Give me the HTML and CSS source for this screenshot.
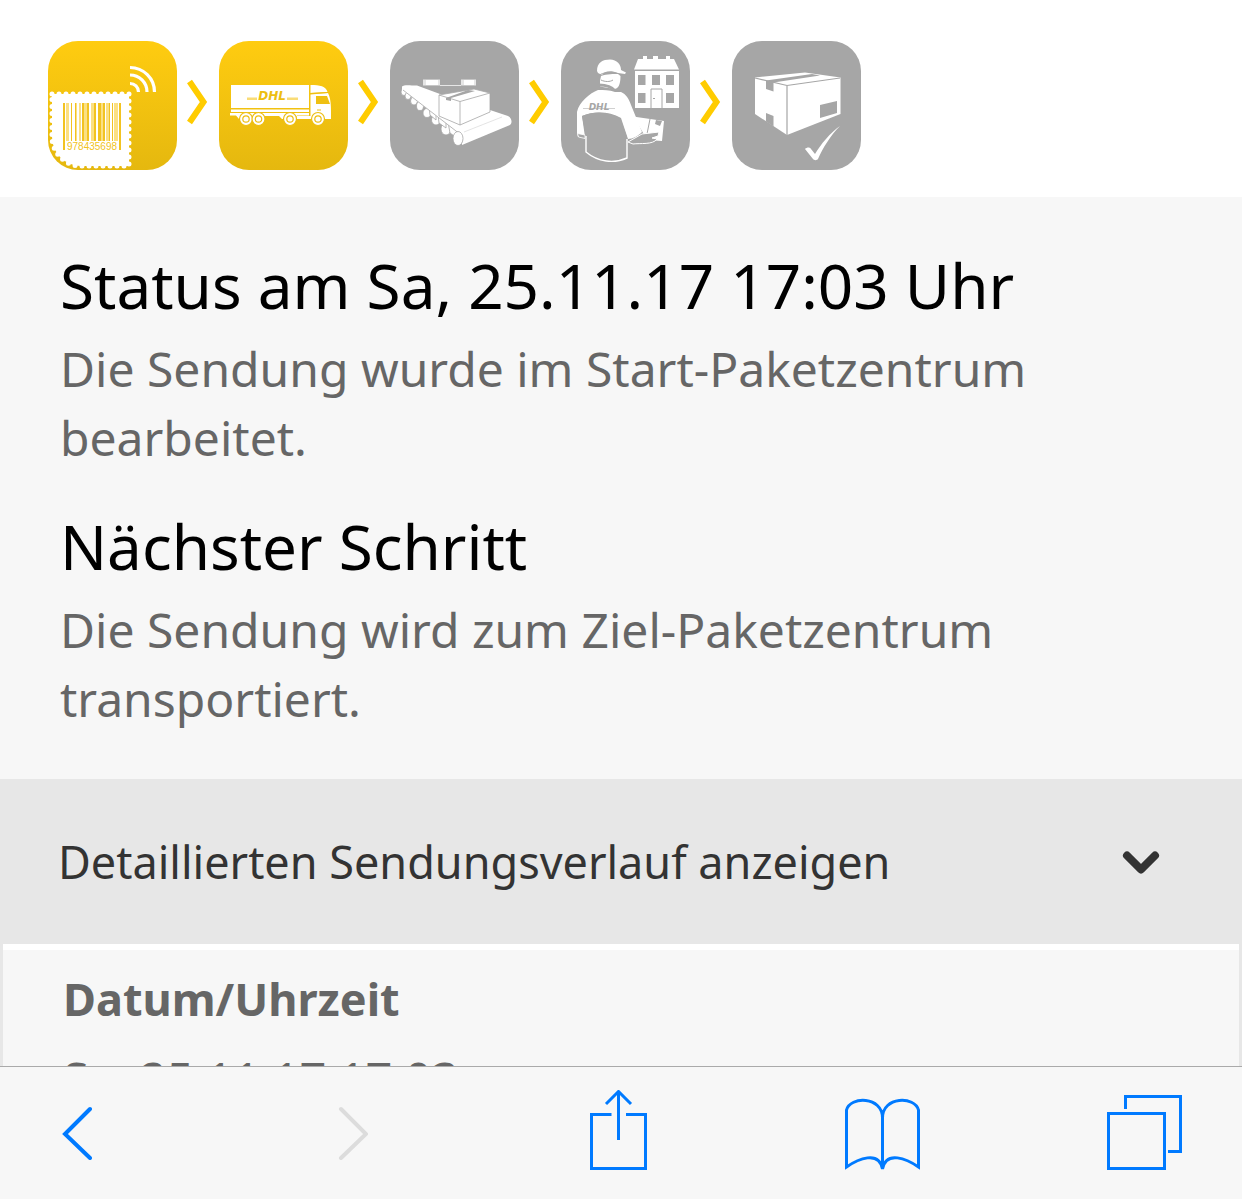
FILE: index.html
```html
<!DOCTYPE html>
<html lang="de">
<head>
  <meta charset="UTF-8" />
  <meta name="viewport" content="width=device-width, initial-scale=1.0"/>
  <title>DHL Sendungsverfolgung</title>
  <link rel="stylesheet" href="styles.css">
</head>
<body>
<svg class="defs" aria-hidden="true">
  <defs>
    <linearGradient id="gold" x1="0" y1="0" x2="0" y2="1">
      <stop offset="0" stop-color="#ffcc10"/>
      <stop offset="1" stop-color="#e5b80f"/>
    </linearGradient>
    <symbol id="arrow" viewBox="0 0 22 54">
      <path d="M2.500 2.500L16.500 23L2.500 43.500" fill="none" stroke="#fc0" stroke-width="6"/>
    </symbol>
  </defs>
</svg>

<main class="page">
  <ol class="steps">
    <li class="step">
      <!-- Stamp with barcode -->
      <svg class="step-icon" viewBox="0 0 129 129" role="img" aria-label="Elektronisch angekündigt">
        <rect width="129" height="129" rx="30" fill="url(#gold)"/>
        <path d="M4 53H81V125H33A29 29 0 0 1 4 96Z" fill="#fff"/>
        <path d="M4 53H81V125H33A29 29 0 0 1 4 96Z" fill="none" stroke="#fff" stroke-width="5" stroke-linecap="round" stroke-dasharray="0 7"/>
        <g fill="none" stroke="#fff" stroke-width="3.200">
          <path d="M82 26.500A24.500 24.500 0 0 1 106.500 51"/>
          <path d="M82 34A17 17 0 0 1 99 51"/>
          <path d="M82 42.500A8.500 8.500 0 0 1 90.500 51"/>
        </g>
        <path d="M18 62h3v38h-3zM27 62h2v38h-2zM31 62h2v38h-2zM35 62h4v38h-4zM43 62h4v38h-4zM53 62h2v38h-2zM58 62h4v38h-4zM66 62h4v38h-4z" fill="#fbe083"/>
        <g fill="#f2c321">
          <path d="M15 62h2v47h-2zM71 62h2v47h-2z"/>
          <path d="M23 62h1v38h-1zM27 62h1v38h-1zM34 62h2v38h-2zM39 62h2v38h-2zM46 62h2v38h-2zM50 62h3v38h-3zM55 62h2v38h-2zM61 62h1v38h-1zM64 62h1v38h-1z"/>
        </g>
        <text class="barcode-text" x="44" y="109" text-anchor="middle">978435698</text>
      </svg>
      <svg class="step-arrow" aria-hidden="true"><use href="#arrow"/></svg>
    </li>
    <li class="step">
      <!-- Truck -->
      <svg class="step-icon" viewBox="0 0 129 129" role="img" aria-label="Transport zum Start-Paketzentrum">
        <rect width="129" height="129" rx="30" fill="url(#gold)"/>
        <path d="M12 44H90V67H12zM12 68.500H90V71H12zM11 72H90V74.500H78L76 78H63L60 75H46L44 78H20L17 74.500H11z" fill="#fff"/>
        <path d="M91.500 44C101 44 107 45 108.500 51L91.500 52zM91.500 53.500L109 52C112 58 112 66 112 70V78H78V75H91.500z" fill="#fff"/>
        <path d="M97 55H108L111 63H97z" fill="#efc012"/>
        <path d="M98 69h4M91 52.500l18-1" stroke="#efc012" stroke-width="1"/>
        <path d="M28 56.500H38V59H28zM68 56.500H79V59H68z" fill="#f9dc77"/>
        <text class="logo-text" x="53" y="59" text-anchor="middle">DHL</text>
        <g fill="#fff" stroke="#edbe12" stroke-width="1.200">
          <circle cx="27" cy="78" r="6.500"/><circle cx="39.500" cy="78" r="6.500"/>
          <circle cx="71" cy="78" r="6.500"/><circle cx="99" cy="78" r="6.500"/>
          <circle cx="27" cy="78" r="3.200"/><circle cx="39.500" cy="78" r="3.200"/>
          <circle cx="71" cy="78" r="3.200"/><circle cx="99" cy="78" r="3.200"/>
        </g>
      </svg>
      <svg class="step-arrow" aria-hidden="true"><use href="#arrow"/></svg>
    </li>
    <li class="step">
      <!-- Conveyor belt -->
      <svg class="step-icon" viewBox="0 0 129 129" role="img" aria-label="Ziel-Paketzentrum">
        <rect width="129" height="129" rx="30" fill="#a6a6a6"/>
        <path d="M33 38.500H50V44.500H33zM71 38.500H86V44.500H71zM50 44h21v1H50z" fill="#e6e6e6"/>
        <path d="M36 39H48V44H36zM74 39H84V44H74z" fill="#fff"/>
        <g fill="#fff" stroke="#a6a6a6" stroke-width=".8">
          <ellipse cx="14" cy="51" rx="3" ry="3.500"/><ellipse cx="18" cy="55" rx="3" ry="3.500"/>
          <ellipse cx="24" cy="60" rx="3.500" ry="4"/><ellipse cx="30" cy="65" rx="3.500" ry="4.500"/>
          <ellipse cx="37" cy="72" rx="4" ry="4.500"/><ellipse cx="46" cy="79" rx="4.500" ry="5"/>
          <ellipse cx="56" cy="88" rx="5" ry="6"/>
          <path d="M39 66l7 6v7l-6-5zM48 73l8 6v8l-7-5zM58 81l9 7v9l-7-5z"/>
          <path d="M12 45.500C14 43.500 20 44.500 27 44.500L50 53L100 69L118 75C122 77 122.500 82 120 84L72 104C72 96 70 92 66 90L12 49z" stroke="none"/>
          <path d="M13 49L66 90C72 94 73 99 71 104" fill="none"/>
          <ellipse cx="68" cy="97.500" rx="5" ry="7"/>
          <path d="M74 91L112 76" fill="none" stroke="#ddd"/>
          <path d="M49 54L84 48L100 52V71L70 84L49 75z"/>
          <path d="M49 54L70 60.500L100 52M70 60.500V84" fill="none"/>
        </g>
        <path d="M56 57L78 49L85 50L61 57V60L56 59z" fill="#a6a6a6"/>
      </svg>
      <svg class="step-arrow" aria-hidden="true"><use href="#arrow"/></svg>
    </li>
    <li class="step">
      <!-- Courier and house -->
      <svg class="step-icon" viewBox="0 0 129 129" role="img" aria-label="In Zustellung">
        <rect width="129" height="129" rx="30" fill="#a6a6a6"/>
        <path d="M77 18H82V15H86V18H92V15H97V18H105V15H109V18H113L118 28.500H73zM74 30H118V67H74z" fill="#fff"/>
        <path d="M77 34H84.500V44H77zM91 34H99V44H91zM105 34H113V44H105zM77 52H84.500V62H77zM105 52H113V62H105z" fill="#a6a6a6"/>
        <path d="M90 67V48H101V67M92 57.500h2" fill="none" stroke="#a6a6a6"/>
        <path d="M36 30C36 21 42 18.500 49 18.500C56 19 60 23 60 29L65 31.500L64 33L57 32C50 29 43 30 41 34L37 32z" fill="#fff"/>
        <path d="M40 35C46 33 53 33 57 33L59.500 35C59.500 44 57 48 53 48L39 45.500V40z" fill="#fff"/>
        <path d="M38 34.500C42 31 50 31 56 32.500M40 39C44 41 49 41 52 39" fill="none" stroke="#a6a6a6" stroke-width="1"/>
        <path d="M38 44C44 44 51 46 54 50" fill="none" stroke="#a6a6a6" stroke-width="3"/>
        <path d="M37 49C43 49 48 49 54 51L60 51C65 53 68 58 70 64L81 91C77 95 72 98 67 98L60 77C48 70 33 70 21 75L24 96H17L16 92V71C18 61 29 52 37 49z" fill="#fff"/>
        <path d="M16.500 92.500L24 94V97.500L17.500 96z" fill="#a6a6a6" stroke="#fff" stroke-width=".8"/>
        <path d="M21 75C34 69 48 71 59 77L66 96V117C53 122 37 118 25 111V96z" fill="#a6a6a6"/>
        <path d="M25 95V111C37 121 53 123 66 117V98" fill="none" stroke="#fff" stroke-width="1.400"/>
        <path d="M72 75.500L103 80L101 100L86 99L81 90z" fill="#fff"/>
        <path d="M89 78L86 93" fill="none" stroke="#a6a6a6"/>
        <path d="M95 79L94 83L99 85L101 80z" fill="#a6a6a6"/>
        <path d="M67 101L81 93L98 91L97 95L91 97L96 98C92 104 79 102 72 103L67 101z" fill="#a6a6a6" stroke="#fff" stroke-width="1"/>
        <path d="M22 67H54V68H22z" fill="#d0d0d0"/>
        <text class="logo-text logo-text-gray" x="38" y="69" text-anchor="middle">DHL</text>
      </svg>
      <svg class="step-arrow" aria-hidden="true"><use href="#arrow"/></svg>
    </li>
    <li class="step">
      <!-- Delivered parcel -->
      <svg class="step-icon" viewBox="0 0 129 129" role="img" aria-label="Zugestellt">
        <rect width="129" height="129" rx="30" fill="#a6a6a6"/>
        <path d="M23 36.500L73 31.500L108.500 36.500V73L55 94L23 73z" fill="#fff"/>
        <path d="M23 37L55 44.500L108 37M55 44.500V94" fill="none" stroke="#a6a6a6" stroke-width="1.200"/>
        <path d="M34 39.500L80 33L88 34.500L41.500 41.500V50.500L34 48zM34 72L41.500 75V85.500L34 80.500zM88 64L105 60V72L88 77z" fill="#a6a6a6"/>
        <path d="M73 108C75 106 78 106 79 108L83 113C89 103 98 92 108 85C98 95 91 107 86 118C85 119.500 82 119.500 81 118z" fill="#fff"/>
      </svg>
    </li>
  </ol>

  <section class="status">
    <h2>Status am Sa, 25.11.17 17:03 Uhr</h2>
    <p>Die Sendung wurde im Start-Paketzentrum bearbeitet.</p>
    <h2>Nächster Schritt</h2>
    <p>Die Sendung wird zum Ziel-Paketzentrum transportiert.</p>
  </section>

  <button class="toggle" type="button" aria-expanded="true" aria-controls="history">
    <span>Detaillierten Sendungsverlauf anzeigen</span>
    <svg class="toggle-icon" viewBox="0 0 38 24" aria-hidden="true">
      <path d="M5 5.500L19 19.500L33 5.500" fill="none" stroke="#333" stroke-width="8" stroke-linecap="round" stroke-linejoin="round"/>
    </svg>
  </button>

  <div class="history" id="history">
    <table>
      <thead><tr><th scope="col">Datum/Uhrzeit</th></tr></thead>
      <tbody><tr><td>Sa, 25.11.17 17:03</td></tr></tbody>
    </table>
  </div>
</main>

<nav class="toolbar" aria-label="Browser">
  <button type="button" aria-label="Zurück">
    <svg width="30" height="54" viewBox="0 0 30 54"><path d="M28 3L3 28L28 52"/></svg>
  </button>
  <button type="button" aria-label="Vorwärts" disabled>
    <svg width="30" height="54" viewBox="0 0 30 54"><path d="M3 3L28 28L3 52"/></svg>
  </button>
  <button type="button" aria-label="Teilen">
    <svg class="icon-thin" width="57" height="86" viewBox="0 0 57 86">
      <path d="M21.500 24.500H1.500V78.500H55.500V24.500H36M28.500 50V1.500M16 14L28.500 1.500L41 14"/>
    </svg>
  </button>
  <button type="button" aria-label="Lesezeichen">
    <svg class="icon-thin" width="75" height="78" viewBox="0 0 75 78">
      <path d="M37.500 74V24C37.500 2 5 2 1.500 16V73C13 65 34 56 37.500 75C41 56 62 65 73.500 73V16C70 2 37.500 2 37.500 24"/>
    </svg>
  </button>
  <button type="button" aria-label="Tabs">
    <svg class="icon-thin" width="75" height="78" viewBox="0 0 75 78">
      <path d="M1.500 19.500H57.500V74.500H1.500zM18.500 15V2.500H73.500V57.500H61"/>
    </svg>
  </button>
</nav>
</body>
</html>
```

FILE: styles.css
```css
:root {
  --blue: #007aff;
  --panel: #f7f7f7;
  --bar: #e7e7e7;
  --text: #666666;
  --text-dark: #333333;
}

* {
  box-sizing: border-box;
}

body {
  font-family: 'Noto Sans', 'Open Sans', sans-serif;
  background: #fff;
  color: var(--text);
  margin: 0;
  height: 100vh;
  display: flex;
  flex-direction: column;
}

.defs {
  position: absolute;
  width: 0;
  height: 0;
}

.page {
  flex: 1;
  min-height: 0;
  overflow: hidden;
}

.steps {
  display: flex;
  gap: 10px;
  list-style: none;
  margin: 0;
  padding: 41px 48px 27px;
}

.step {
  display: flex;
  align-items: center;
  gap: 10px;
}

.step-icon {
  display: block;
  width: 129px;
  height: 129px;
}

.step-arrow {
  width: 22px;
  height: 54px;
}

.barcode-text {
  font: 10px 'Liberation Sans', sans-serif;
  fill: #f2c321;
}

.logo-text {
  font: italic bold 12px 'DejaVu Sans', sans-serif;
  fill: #edbe12;
}

.logo-text-gray {
  font-size: 9px;
  fill: #a6a6a6;
}

.status {
  background: var(--panel);
  padding: 46px 60px 14px;
}

.status h2 {
  color: #000;
  font-size: 62px;
  font-weight: 400;
  line-height: 84px;
  margin: 0 0 7px;
}

.status p {
  font-size: 48px;
  line-height: 69px;
  margin: 0 0 32px;
}

.toggle {
  display: flex;
  align-items: center;
  justify-content: space-between;
  width: 100%;
  padding: 48px 82px 48px 58px;
  border: none;
  background: var(--bar);
  color: var(--text-dark);
  font: 45px/69px 'Noto Sans', 'Open Sans', sans-serif;
  text-align: left;
  cursor: pointer;
}

.toggle-icon {
  width: 38px;
  height: 24px;
}

.history {
  background: var(--panel);
  border: 3px solid var(--bar);
  border-width: 0 3px;
}

.history table {
  width: 100%;
  border-top: 6px solid #fff;
  border-spacing: 0;
}

.history th,
.history td {
  padding: 14px 60px 0;
  font-size: 45px;
  line-height: 69px;
  text-align: left;
}

.history td {
  padding-top: 12px;
  font-size: 47px;
}

.toolbar {
  display: grid;
  grid-template-columns: 276fr 252fr 255fr 262fr 75px;
  align-items: center;
  justify-items: start;
  height: 133px;
  padding: 0 60px 0 62px;
  background: var(--panel);
  border-top: 1px solid #aaa;
}

.toolbar button {
  padding: 0;
  border: none;
  background: none;
  color: var(--blue);
  cursor: pointer;
}

.toolbar button:disabled {
  color: #dcdcdc;
  cursor: default;
}

.toolbar svg {
  display: block;
  fill: none;
  stroke: currentColor;
  stroke-width: 4;
  stroke-linecap: round;
}

.toolbar .icon-thin {
  stroke-width: 3;
  stroke-linecap: butt;
}
```
